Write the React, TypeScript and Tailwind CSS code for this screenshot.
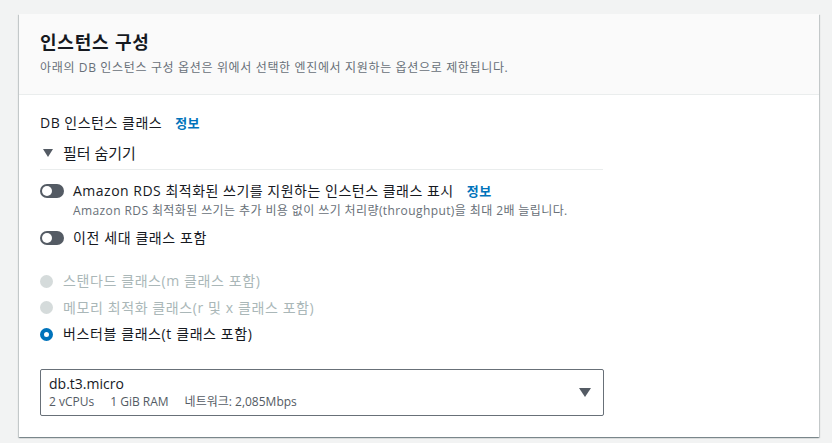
import React from 'react';

const font = "font-['Open_Sans','Noto_Sans_CJK_KR',sans-serif]";

const Toggle: React.FC = () => (
  <span className="relative block h-[14px] w-[24px] shrink-0 rounded-full bg-[#545b64]">
    <span className="absolute left-[2px] top-[2px] h-[10px] w-[10px] rounded-full bg-white" />
  </span>
);

const Radio: React.FC<{ checked?: boolean; disabled?: boolean; label: string }> = ({ checked, disabled, label }) => (
  <div className="flex h-[26.5px] items-center gap-[10px]">
    {checked ? (
      <span className="h-[13px] w-[13px] shrink-0 rounded-full border-[4px] border-[#0073bb] bg-white" />
    ) : (
      <span className="h-[13px] w-[13px] shrink-0 rounded-full bg-[#d5dbdb]" />
    )}
    <span className={`text-[14px] leading-[20px] tracking-[0.6px] ${disabled ? 'text-[#aab7b8]' : 'text-[#16191f]'}`}>{label}</span>
  </div>
);

const App: React.FC = () => {
  const radios = [
    { label: '스탠다드 클래스(m 클래스 포함)', disabled: true },
    { label: '메모리 최적화 클래스(r 및 x 클래스 포함)', disabled: true },
    { label: '버스터블 클래스(t 클래스 포함)', checked: true }
  ];

  return (
    <div className={`min-h-[443px] bg-[#f2f3f3] px-[19px] pt-[14px] ${font}`}>
      <div className="w-[800px] bg-white shadow-[0_1px_1px_0_rgba(0,28,36,0.3),1px_1px_1px_0_rgba(0,28,36,0.15),-1px_1px_1px_0_rgba(0,28,36,0.15)]">
        <div className="h-[81px] border-b border-[#eaeded] bg-[#fafafa] px-[21px] pt-[16px]">
          <h2 className="text-[18px] font-bold leading-[24px] tracking-[0.8px] text-[#16191f]">인스턴스 구성</h2>
          <p className="mt-[5px] text-[12px] leading-[18px] tracking-[0.65px] text-[#687078]">
            아래의 DB 인스턴스 구성 옵션은 위에서 선택한 엔진에서 지원하는 옵션으로 제한됩니다.
          </p>
        </div>

        <div className="px-[21px] pb-[21px] pt-[18px]">
          <div className="flex items-center gap-[13px] text-[14px] leading-[20px] tracking-[0.5px] text-[#16191f]">
            <span>DB 인스턴스 클래스</span>
            <span className="text-[13px] font-semibold text-[#0073bb]">정보</span>
          </div>

          <div className="mt-[9px] w-[563px] border-b border-[#eaeded] pb-[5px]">
            <div className="flex items-center gap-[10px] pl-[3px] text-[15px] leading-[22px] text-[#16191f]">
              <svg width="10" height="8" viewBox="0 0 10 8">
                <path d="M0 0 H10 L5 8 Z" fill="#545b64" />
              </svg>
              <span>필터 숨기기</span>
            </div>
          </div>

          <div className="mt-[11px] flex items-start gap-[9px]">
            <div className="flex h-[20px] items-center">
              <Toggle />
            </div>
            <div>
              <div className="flex items-center gap-[13px] text-[14px] leading-[20px] tracking-[0.5px] text-[#16191f]">
                <span>Amazon RDS 최적화된 쓰기를 지원하는 인스턴스 클래스 표시</span>
                <span className="text-[13px] font-semibold text-[#0073bb]">정보</span>
              </div>
              <p className="text-[12px] leading-[20px] tracking-[0.4px] text-[#687078]">
                Amazon RDS 최적화된 쓰기는 추가 비용 없이 쓰기 처리량(throughput)을 최대 2배 늘립니다.
              </p>
            </div>
          </div>

          <div className="mt-[7px] flex items-center gap-[9px] text-[14px] leading-[20px] tracking-[0.6px] text-[#16191f]">
            <Toggle />
            <span>이전 세대 클래스 포함</span>
          </div>

          <div className="mt-[20px]">
            {radios.map((r, i) => (
              <Radio key={i} label={r.label} checked={r.checked} disabled={r.disabled} />
            ))}
          </div>

          <div className="mt-[21px] flex h-[47px] w-[564px] items-center justify-between rounded-[2px] border border-[#687078] pl-[8px] pr-[12px]">
            <div>
              <div className="text-[14px] leading-[19px] text-[#16191f]">db.t3.micro</div>
              <div className="flex gap-[16px] text-[12px] leading-[18px] text-[#545b64]">
                <span>2 vCPUs</span>
                <span>1 GiB RAM</span>
                <span>네트워크: 2,085Mbps</span>
              </div>
            </div>
            <svg width="12" height="9" viewBox="0 0 12 9">
              <path d="M0 0 H12 L6 9 Z" fill="#545b64" />
            </svg>
          </div>
        </div>
      </div>
    </div>
  );
};

export default App;
